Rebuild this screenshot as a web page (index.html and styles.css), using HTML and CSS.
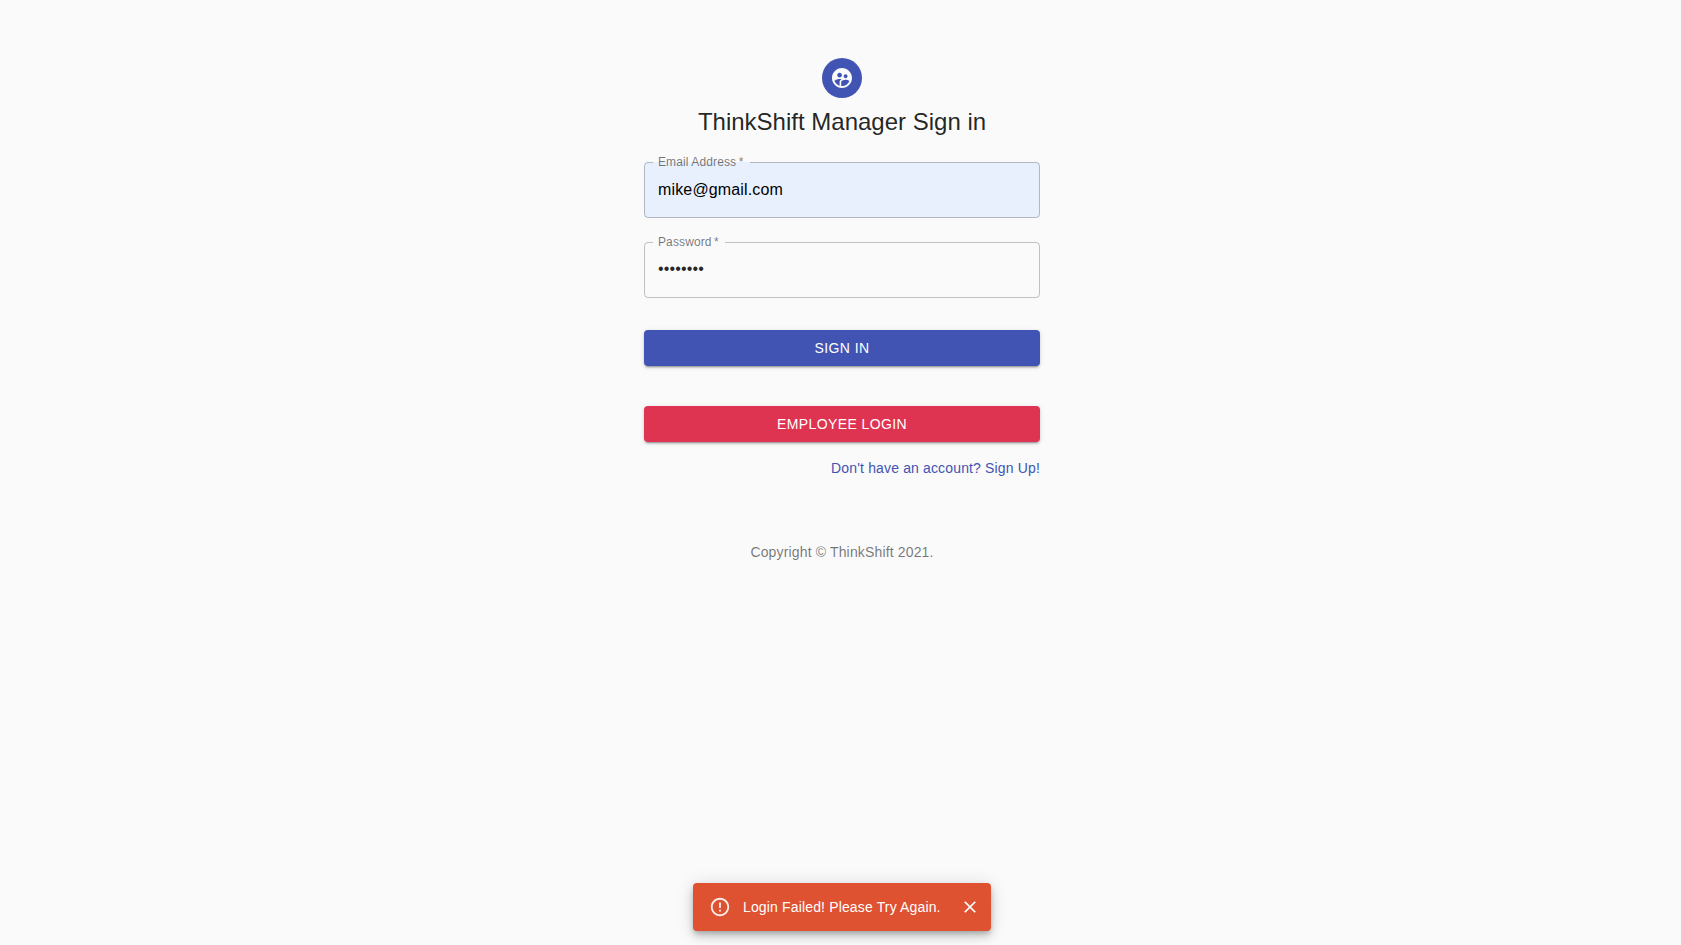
FILE: index.html
```html
<!DOCTYPE html>
<html lang="en">
<head>
<meta charset="utf-8">
<title>ThinkShift Manager Sign in</title>
<link rel="stylesheet" href="styles.css">
</head>
<body>
<main class="container">
  <div class="avatar">
    <svg viewBox="0 0 24 24" width="24" height="24" fill="currentColor"><path d="M11.99 2c-5.52 0-10 4.48-10 10s4.48 10 10 10 10-4.48 10-10-4.48-10-10-10zm3.61 6.34c1.07 0 1.93.86 1.93 1.93 0 1.07-.86 1.93-1.93 1.93-1.07 0-1.93-.86-1.93-1.93-.01-1.07.86-1.93 1.93-1.93zm-6-1.58c1.3 0 2.36 1.06 2.36 2.36 0 1.3-1.06 2.36-2.36 2.36s-2.36-1.06-2.36-2.36c0-1.31 1.05-2.36 2.36-2.36zm0 9.13v3.75c-2.4-.75-4.3-2.6-5.14-4.96 1.05-1.12 3.67-1.69 5.14-1.69.53 0 1.2.08 1.9.22-1.64.87-1.9 2.02-1.9 2.68zM11.99 20c-.27 0-.53-.01-.79-.04v-4.07c0-1.42 2.94-2.13 4.4-2.13 1.07 0 2.92.39 3.84 1.15-1.17 2.97-4.06 5.09-7.45 5.09z"/></svg>
  </div>
  <h1 class="title">ThinkShift Manager Sign in</h1>
  <form class="form">
    <div class="field">
      <input class="input input-filled" type="text" value="mike@gmail.com" aria-label="Email Address">
      <fieldset class="outline"><legend class="label label-email">Email Address&thinsp;*</legend></fieldset>
    </div>
    <div class="field">
      <input class="input" type="password" value="password" aria-label="Password">
      <fieldset class="outline"><legend class="label">Password&thinsp;*</legend></fieldset>
    </div>
    <button class="button button-primary" type="button">Sign In</button>
    <button class="button button-secondary" type="button">Employee Login</button>
    <a class="link">Don't have an account? Sign Up!</a>
  </form>
  <p class="copyright">Copyright © ThinkShift 2021.</p>
</main>
<div class="snackbar">
  <svg class="alert-icon" viewBox="0 0 24 24" width="22" height="22" fill="currentColor"><path d="M11 15h2v2h-2zm0-8h2v6h-2zm.99-5C6.47 2 2 6.48 2 12s4.47 10 9.99 10C17.52 22 22 17.52 22 12S17.52 2 11.99 2zM12 20c-4.42 0-8-3.58-8-8s3.58-8 8-8 8 3.58 8 8-3.58 8-8 8z"/></svg>
  <span class="message">Login Failed! Please Try Again.</span>
  <svg class="close" viewBox="0 0 24 24" width="20" height="20" fill="currentColor"><path d="M19 6.41L17.59 5 12 10.59 6.41 5 5 6.41 10.59 12 5 17.59 6.41 19 12 13.41 17.59 19 19 17.59 13.41 12z"/></svg>
</div>
</body>
</html>
```

FILE: styles.css
```css
* {
  box-sizing: border-box;
}

body {
  margin: 0;
  min-height: 945px;
  padding: 58px 0 14px 3px;
  display: flex;
  flex-direction: column;
  align-items: center;
  background: #fafafa;
  color: rgba(0, 0, 0, 0.87);
  font-family: "Liberation Sans", Arial, sans-serif;
  font-size: 14px;
  line-height: 20px;
  letter-spacing: 0.01071em;
}

.container {
  width: 396px;
  display: flex;
  flex-direction: column;
  align-items: center;
}

.avatar {
  width: 40px;
  height: 40px;
  border-radius: 50%;
  display: flex;
  align-items: center;
  justify-content: center;
  background: #4154b3;
  color: #fafafa;
}

.title {
  margin: 8px 0 0;
  font-size: 24px;
  font-weight: 400;
  line-height: 32px;
  letter-spacing: 0;
}

.form {
  width: 100%;
  margin-top: 24px;
  display: flex;
  flex-direction: column;
}

.field {
  height: 56px;
  margin-bottom: 24px;
  display: grid;
}

/* Input and outline share one grid cell; the outline is drawn on top. */
.input,
.outline {
  grid-area: 1 / 1;
}

.input {
  width: 100%;
  height: 56px;
  padding: 0 14px 2px;
  border: 0;
  border-radius: 4px;
  outline: 0;
  background: transparent;
  color: rgba(0, 0, 0, 0.87);
  font: 16px "Liberation Sans", Arial, sans-serif;
  letter-spacing: 0.00938em;
}

.input-filled {
  padding-bottom: 0;
  background: #e8f0fe;
  color: #000;
}

.outline {
  min-width: 0;
  height: 61px;
  margin: -5px 0 0;
  padding: 0 8px;
  border: 1px solid rgba(0, 0, 0, 0.23);
  border-radius: 4px;
  pointer-events: none;
}

.label {
  height: 11px;
  padding: 0 6px 0 5px;
  color: rgba(0, 0, 0, 0.54);
  font-size: 12px;
  line-height: 11px;
  letter-spacing: 0.00938em;
}

.label-email {
  padding-right: 7px;
}

.button {
  height: 36px;
  padding: 0 16px;
  border: 0;
  border-radius: 4px;
  color: #fff;
  font: 14px "Liberation Sans", Arial, sans-serif;
  letter-spacing: 0.02857em;
  text-transform: uppercase;
  box-shadow: 0 3px 1px -2px rgba(0, 0, 0, 0.2), 0 2px 2px 0 rgba(0, 0, 0, 0.14), 0 1px 5px 0 rgba(0, 0, 0, 0.12);
}

.button-primary {
  margin: 8px 0 40px;
  background: #4154b3;
}

.button-secondary {
  margin-bottom: 16px;
  background: #df3451;
}

.link {
  align-self: flex-end;
  color: #4154b3;
}

.copyright {
  margin: 64px 0 0;
  color: rgba(0, 0, 0, 0.54);
}

.snackbar {
  width: 298px;
  height: 48px;
  margin-top: auto;
  padding: 0 11px 0 16px;
  display: flex;
  align-items: center;
  border-radius: 4px;
  background: #de5131;
  color: #fff;
  box-shadow: 0 3px 5px -1px rgba(0, 0, 0, 0.2), 0 6px 10px 0 rgba(0, 0, 0, 0.14), 0 1px 18px 0 rgba(0, 0, 0, 0.12);
}

.alert-icon {
  margin-right: 12px;
  opacity: 0.9;
}

.message {
  white-space: nowrap;
}

.close {
  margin-left: auto;
}
```
